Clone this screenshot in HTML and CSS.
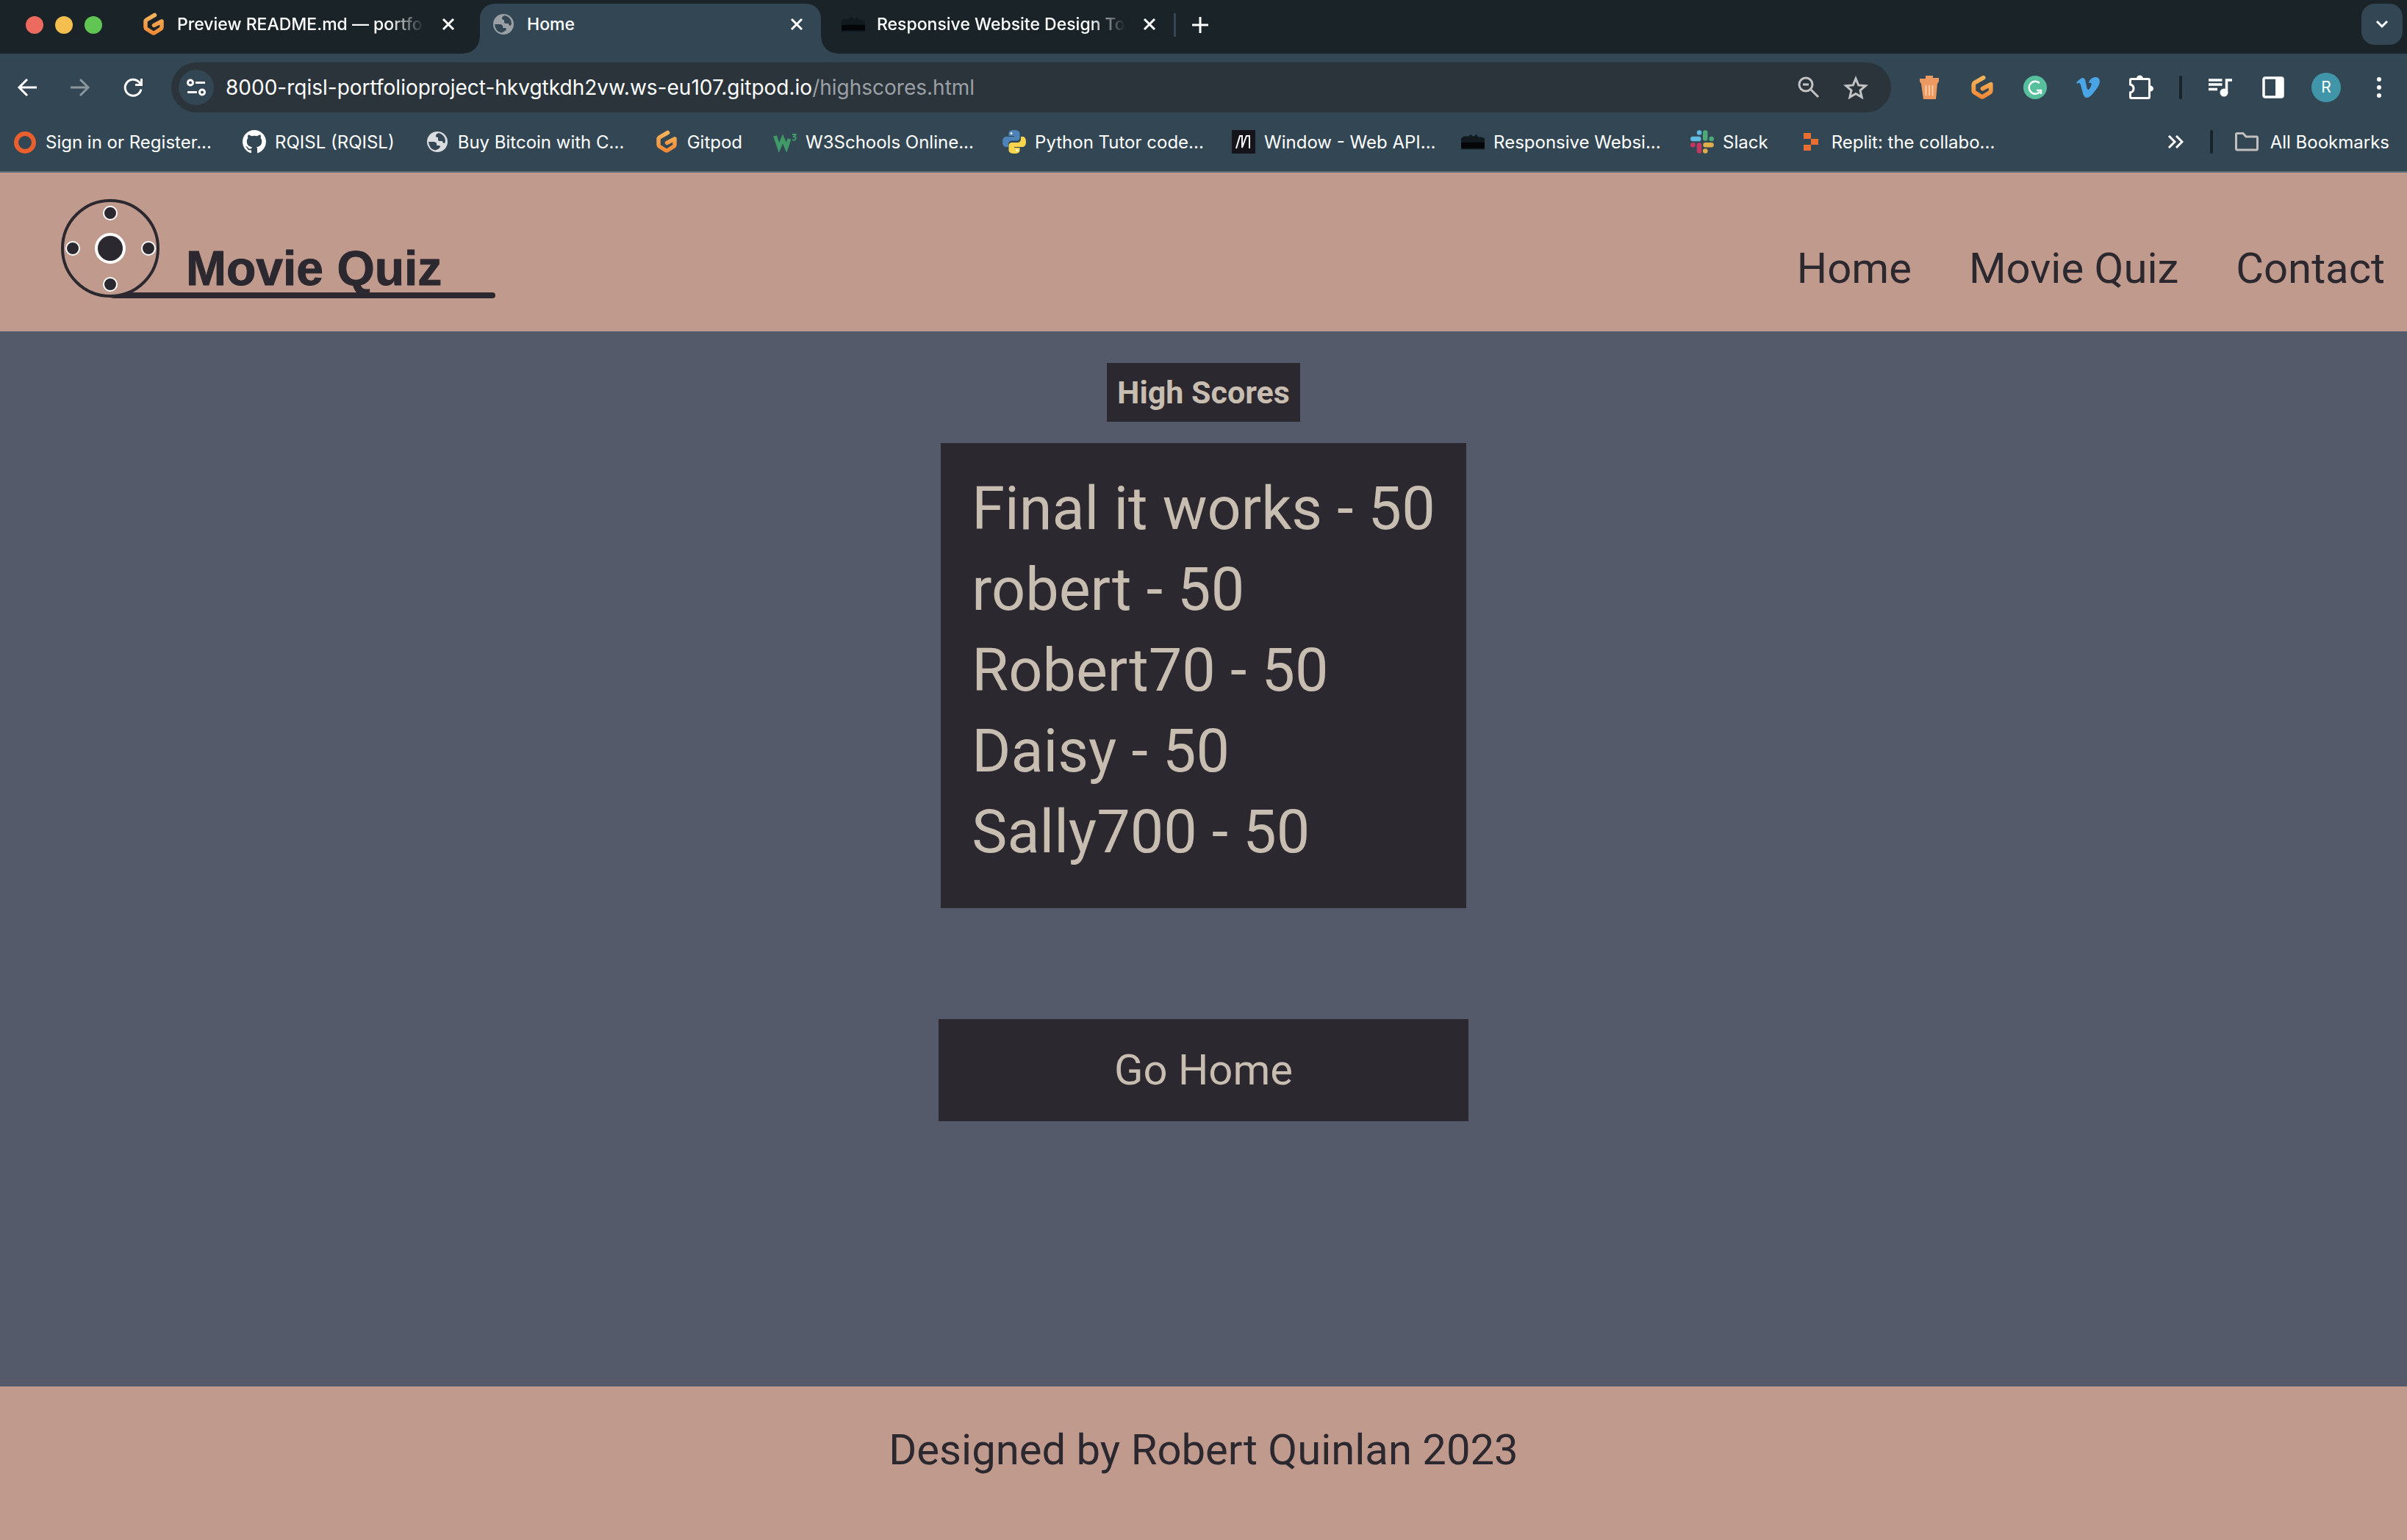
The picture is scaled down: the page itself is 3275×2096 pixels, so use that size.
FILE: index.html
```html
<!DOCTYPE html>
<html lang="en">
<head>
<meta charset="utf-8">
<title>Home</title>
<link rel="stylesheet" href="styles.css">
</head>
<body>
<svg class="sprite" aria-hidden="true">
  <defs>
    <linearGradient id="orange" x1="0" y1="0" x2="0" y2="1"><stop offset="0" stop-color="#f5b45c"/><stop offset="1" stop-color="#f08a38"/></linearGradient>
    <symbol id="gitpod" viewBox="0 0 32 32"><path d="M17.500 3.500 6.500 9.800Q5 10.800 5 12.500V20Q5 21.600 6.500 22.500L14.500 27.500Q16 28.400 17.500 27.500L25.500 22.500Q27 21.600 27 20V12L16.500 17.500" fill="none" stroke="url(#orange)" stroke-width="5.500" stroke-linecap="round" stroke-linejoin="round"/></symbol>
    <symbol id="globe" viewBox="0 0 32 32"><circle cx="16" cy="16" r="14" fill="currentColor"/><path class="globe-land" d="M4 16h8q4 1 3 5h3q2 0 2 2-2 3-7 4.500Q5 26 4 16zM18 4q-4 1-4 4 0 2 3 2v3q0 2 3 2h3q0 3 3 3l1-3q0-8-9-11z"/></symbol>
    <symbol id="close" viewBox="0 0 18 18"><path d="m2 2 14 14M16 2 2 16" fill="none" stroke="currentColor" stroke-width="3"/></symbol>
    <symbol id="skyline" viewBox="0 0 34 22"><path d="M0 22V6l4-3h7l3-3 3 3h2l3-3 3 4h4l5 2v16z" fill="#101a1f"/><path d="M0 12h34v8H0z" fill="#030506"/></symbol>
  </defs>
</svg>

<header class="browser">
  <div class="tabstrip">
    <div class="lights"><span class="light red"></span><span class="light yellow"></span><span class="light green"></span></div>
    <div class="tab first">
      <svg class="favicon"><use href="#gitpod"/></svg>
      <span class="tab-title faded">Preview README.md — portfo</span>
      <button class="tab-close" aria-label="Close tab"><svg width="18" height="18"><use href="#close"/></svg></button>
    </div>
    <div class="tab active">
      <svg class="favicon gray"><use href="#globe"/></svg>
      <span class="tab-title">Home</span>
      <button class="tab-close" aria-label="Close tab"><svg width="18" height="18"><use href="#close"/></svg></button>
    </div>
    <div class="tab last">
      <svg class="favicon"><use href="#skyline"/></svg>
      <span class="tab-title faded">Responsive Website Design To</span>
      <button class="tab-close" aria-label="Close tab"><svg width="18" height="18"><use href="#close"/></svg></button>
    </div>
    <button class="new-tab" aria-label="New tab"><svg width="22" height="22" viewBox="0 0 22 22"><path d="M11 0v22M0 11h22" stroke="#fff" stroke-width="3"/></svg></button>
    <button class="tab-search" aria-label="Search tabs"><svg width="18" height="12" viewBox="0 0 18 12"><path d="m2 2 7 7 7-7" fill="none" stroke="#fff" stroke-width="3"/></svg></button>
  </div>

  <div class="toolbar">
    <button class="tool" aria-label="Back"><svg width="28" height="28" viewBox="0 0 28 28"><path d="M27 14H4M14 3 3 14l11 11" fill="none" stroke="#fff" stroke-width="3"/></svg></button>
    <button class="tool" aria-label="Forward"><svg width="28" height="28" viewBox="0 0 28 28"><path d="M1 14h23M14 3l11 11-11 11" fill="none" stroke="#8b959c" stroke-width="3"/></svg></button>
    <button class="tool" aria-label="Reload"><svg width="28" height="28" viewBox="0 0 28 28"><path d="M25 16.500A11 11 0 1 1 22 6.500l3 3M25.500 2v8.500H17" fill="none" stroke="#fff" stroke-width="3"/></svg></button>
    <div class="omnibox">
      <button class="site-info" aria-label="Site information"><svg width="26" height="24" viewBox="0 0 26 24" fill="none" stroke="#fff" stroke-width="3"><circle cx="5" cy="5.500" r="3.500"/><path d="M12 5.500h13M1 18.500h13"/><circle cx="21" cy="18.500" r="3.500"/></svg></button>
      <div class="url">8000-rqisl-portfolioproject-hkvgtkdh2vw.ws-eu107.gitpod.io<span class="path">/highscores.html</span></div>
      <button class="omni-icon" aria-label="Zoom"><svg width="30" height="30" viewBox="0 0 30 30" fill="none" stroke="#c3c3c3" stroke-width="3"><circle cx="11" cy="11" r="9"/><path d="M7 11h8M18 18l10 10"/></svg></button>
      <button class="omni-icon" aria-label="Bookmark this page"><svg width="34" height="32" viewBox="0 0 34 32"><path d="m17 4 3.700 8.900 9.600.8-7.300 6.300 2.200 9.400L17 24.400l-8.200 5 2.200-9.400-7.300-6.300 9.600-.8z" fill="none" stroke="#c3c3c3" stroke-width="3"/></svg></button>
    </div>
    <button class="tool" aria-label="Trash"><svg width="28" height="32" viewBox="0 0 28 32"><path d="M9 0h10v3h8v5l-2 3-2 21H6L3 11 1 8V4h8z" fill="#ec9a62"/><path d="M9.500 13v14M14 13v14M18.500 13v14" stroke="#f7c9a4" stroke-width="2"/></svg></button>
    <button class="tool" aria-label="Gitpod"><svg width="34" height="34"><use href="#gitpod"/></svg></button>
    <button class="tool" aria-label="Grammarly"><svg width="32" height="32" viewBox="0 0 32 32"><circle cx="16" cy="16" r="16" fill="#57bf9b"/><path d="M22 10A8.500 8.500 0 1 0 22.500 22M18 20h6v5" fill="none" stroke="#fff" stroke-width="2.500"/></svg></button>
    <button class="tool" aria-label="Vimeo"><svg width="32" height="28" viewBox="0 0 32 28"><path d="M31.900 6.500c-.1 3-2.300 7.200-6.600 12.500C20.900 25 17.200 28 14 28c-1.900 0-3.500-1.800-4.800-5.300L6.600 12.900C5.700 9.500 4.700 7.700 3.600 7.700c-.2 0-1 .5-2.300 1.400L0 7.300l4.200-3.700C6 2 7.500 1 8.500.9c2.200-.2 3.600 1.300 4.100 4.600l1.400 7.300c.6 2.900 1.300 4.400 2.100 4.400.6 0 1.500-.9 2.700-2.800 1.200-1.900 1.800-3.300 1.900-4.300.2-1.600-.5-2.400-1.900-2.400-.7 0-1.400.1-2.100.4C18.100 3.500 20.900 1.300 25.200.1c4.600-.3 6.900 2 6.700 6.400z" fill="#4aa5e6"/></svg></button>
    <button class="tool" aria-label="Extensions"><svg width="34" height="36" viewBox="0 0 34 36"><path d="M2.500 8q0-1.500 1.500-1.500H27q1.500 0 1.500 1.500v23q0 1.500-1.500 1.500H4Q2.500 32.500 2.500 31v-6q4.500-1 4.500-5.500T2.500 14z" fill="none" stroke="#fff" stroke-width="3"/><path d="M11 6a4.500 4.500 0 0 1 9 0zM29 15q5 1 5 4.500T29 24z" fill="#fff"/></svg></button>
    <span class="divider tool-divider"></span>
    <button class="tool" aria-label="Media"><svg width="32" height="26" viewBox="0 0 32 26"><path d="M0 3h18.500M0 9h18.500M0 15.500h12M24.500 20V3H32" fill="none" stroke="#fff" stroke-width="3.500"/><circle cx="21" cy="20" r="5.500" fill="#fff"/></svg></button>
    <button class="tool" aria-label="Side panel"><svg width="30" height="30" viewBox="0 0 30 30"><rect x="2" y="2" width="26" height="26" rx="2" fill="none" stroke="#fff" stroke-width="3.500"/><path d="M18 2h10v26H18z" fill="#fff"/></svg></button>
    <button class="tool" aria-label="Profile"><span class="avatar">R</span></button>
    <button class="tool" aria-label="Menu"><svg width="6" height="28" viewBox="0 0 6 28" fill="#fff"><circle cx="3" cy="3" r="3"/><circle cx="3" cy="14" r="3"/><circle cx="3" cy="25" r="3"/></svg></button>
  </div>

  <nav class="bookmarks" aria-label="Bookmarks">
    <a class="bookmark" href="#"><svg viewBox="0 0 32 32"><circle cx="16" cy="17" r="12" fill="none" stroke="#ea5f2e" stroke-width="6"/></svg><span class="long">Sign in or Register...</span></a>
    <a class="bookmark" href="#"><svg viewBox="0 0 16 16"><path fill="#fff" d="M8 0C3.580 0 0 3.580 0 8c0 3.540 2.290 6.530 5.470 7.590.4.070.55-.17.55-.38 0-.19-.01-.82-.01-1.490-2.010.37-2.530-.49-2.690-.94-.09-.23-.48-.94-.82-1.130-.28-.15-.68-.52-.01-.53.63-.01 1.080.58 1.230.82.720 1.210 1.870.87 2.330.66.070-.52.280-.87.510-1.070-1.780-.2-3.640-.89-3.640-3.950 0-.87.310-1.590.820-2.150-.08-.2-.36-1.020.08-2.120 0 0 .67-.21 2.200.82.640-.18 1.320-.27 2-.27s1.360.09 2 .27c1.530-1.040 2.200-.82 2.200-.82.440 1.100.160 1.920.080 2.120.510.560.820 1.270.820 2.150 0 3.070-1.870 3.750-3.650 3.950.290.250.540.730.540 1.480 0 1.070-.01 1.930-.01 2.200 0 .21.150.46.550.38A8 8 0 0 0 16 8c0-4.420-3.580-8-8-8z"/></svg><span>RQISL (RQISL)</span></a>
    <a class="bookmark light-globe" href="#"><svg><use href="#globe"/></svg><span class="long">Buy Bitcoin with C...</span></a>
    <a class="bookmark" href="#"><svg><use href="#gitpod"/></svg><span>Gitpod</span></a>
    <a class="bookmark" href="#"><svg viewBox="0 0 32 32"><path d="m2.500 8 5.500 16 5-12 5 12 4-12" fill="none" stroke="#3f9a68" stroke-width="5"/><path d="M26 6h4.500l-2.500 3q3.500 0 2.500 3t-4.500 1" fill="none" stroke="#3f9a68" stroke-width="2"/></svg><span class="long">W3Schools Online...</span></a>
    <a class="bookmark" href="#"><svg viewBox="0 0 32 32"><path fill="#4d83b8" d="M16 0c-6 0-7.500 2-7.500 4.500V8H16v1H5C2 9 0 11.500 0 16s2 7 4.500 7H8v-4c0-2.500 2-4.500 4.500-4.500h7c2 0 4-1.500 4-4V4.500C23.500 2 21 0 16 0z"/><path fill="#f8d54c" d="M16 32c6 0 7.500-2 7.500-4.500V24H16v-1h11c3 0 5-2.500 5-7s-2-7-4.500-7H25v3.500c0 2.500-2 4.500-4.500 4.500h-8c-2 0-4 1.500-4 4v6.500C8.500 30 11 32 16 32z"/><circle cx="12" cy="4.500" r="1.500" fill="#fff"/><circle cx="20" cy="27.500" r="1.500" fill="#fff"/></svg><span class="long">Python Tutor code...</span></a>
    <a class="bookmark" href="#"><svg viewBox="0 0 32 32"><path fill="#15141a" d="M0 0h32v32H0z"/><path d="M6 25 11 8h3v16L20 8h4v17" fill="none" stroke="#fff" stroke-width="2"/></svg><span class="long">Window - Web API...</span></a>
    <a class="bookmark" href="#"><svg><use href="#skyline"/></svg><span class="long">Responsive Websi...</span></a>
    <a class="bookmark" href="#"><svg viewBox="0 0 32 32" stroke-width="6.500" stroke-linecap="round"><path stroke="#60b9de" d="M3.300 12h8M12 3.500h.1"/><path stroke="#4fa878" d="M20.200 3.500v8M28.600 12h.1"/><path stroke="#dfae49" d="M20.500 20.200h8M20.200 28.600h.1"/><path stroke="#c93561" d="M12 20.500v8M3.400 20.200h.1"/></svg><span>Slack</span></a>
    <a class="bookmark" href="#"><svg viewBox="0 0 32 32" fill="#e66f31"><path d="M6 4h10v8H6zM16 12h10v8H16zM6 20h10v8H6z"/></svg><span class="long">Replit: the collabo...</span></a>
    <button class="overflow" aria-label="More bookmarks"><svg width="22" height="18" viewBox="0 0 22 18"><path d="m2 1 8 8-8 8M12 1l8 8-8 8" fill="none" stroke="#fff" stroke-width="3"/></svg></button>
    <span class="divider"></span>
    <a class="bookmark all" href="#"><svg viewBox="0 0 32 32"><path d="M1.500 25V6q0-1.500 1.500-1.500h8l4 4.500h14q1.500 0 1.500 1.500V25q0 2-1.500 2H3q-1.500 0-1.500-2z" fill="none" stroke="#c3bfbf" stroke-width="3"/></svg><span>All Bookmarks</span></a>
  </nav>
</header>

<div class="page">
  <header class="site-header">
    <a class="logo" href="#" aria-label="Movie Quiz">
      <svg width="600" height="140" viewBox="0 0 600 140">
        <circle cx="70" cy="69" r="65" fill="none" stroke="#2c282f" stroke-width="4"/>
        <path d="M70 137 100 129H590a4 4 0 0 1 0 8z" fill="#2c282f"/>
        <g fill="#2c282f" stroke="#fff" stroke-width="2"><circle cx="70" cy="21" r="9"/><circle cx="19" cy="69" r="9"/><circle cx="122" cy="69" r="9"/><circle cx="70" cy="118" r="9"/></g>
        <circle cx="70" cy="69" r="19" fill="#2c282f" stroke="#fff" stroke-width="4"/>
        <text class="logo-text" x="173" y="119">Movie Quiz</text>
      </svg>
    </a>
    <nav class="site-nav" aria-label="Main"><a href="#">Home</a><a href="#">Movie Quiz</a><a href="#">Contact</a></nav>
  </header>
  <main class="scores">
    <h1>High Scores</h1>
    <ul class="score-list"><li>Final it works - 50</li><li>robert - 50</li><li>Robert70 - 50</li><li>Daisy - 50</li><li>Sally700 - 50</li></ul>
    <a class="go-home" href="#">Go Home</a>
  </main>
  <footer class="site-footer"><p>Designed by Robert Quinlan 2023</p></footer>
</div>
</body>
</html>
```
FILE: styles.css
```css
* { box-sizing: border-box; margin: 0; padding: 0; }

body {
  display: flex;
  flex-direction: column;
  min-height: 100vh;
  font-family: Roboto, "Liberation Sans", sans-serif;
  color: #2c282f;
}

a { color: inherit; text-decoration: none; }
button { display: flex; align-items: center; justify-content: center; border: 0; background: none; color: inherit; font: inherit; }
svg { display: block; flex: none; }
.sprite { position: absolute; width: 0; height: 0; }

/* Browser frame */
.browser {
  background: #334653;
  border-bottom: 2px solid #5f6f7d;
  color: #fff;
  font-family: Inter, "Liberation Sans", sans-serif;
  font-size: 23px;
  font-weight: 500;
}

.tabstrip { display: flex; height: 73px; padding: 5px 6px 0 35px; background: #1a2428; }
.lights { display: flex; gap: 16px; width: 142px; height: 58px; align-items: center; }
.light { width: 24px; height: 24px; border-radius: 50%; }
.red { background: #ed6a5e; }
.yellow { background: #f4bf4f; }
.green { background: #61c554; }

.tab { position: relative; display: flex; align-items: center; width: 476px; padding: 0 24px 12px 16px; }
.tab.first { padding-right: 34px; }
.tab.active { width: 464px; margin-right: 12px; border-radius: 20px 20px 0 0; background: #334653; }
.tab.active::before, .tab.active::after { content: ""; position: absolute; bottom: 0; width: 22px; height: 22px; }
.tab.active::before { right: 100%; background: radial-gradient(circle at 0 0, #1a2428 21px, #334653 22px); }
.tab.active::after { left: 100%; background: radial-gradient(circle at 100% 0, #1a2428 21px, #334653 22px); }
.tab.last { width: 471px; padding-right: 32px; }
.tab.last::after { content: ""; position: absolute; right: 0; top: 13px; width: 3px; height: 32px; background: #334653; }
.favicon { width: 32px; height: 32px; }
.gray { color: #9aa0a6; }
.globe-land { fill: #334653; }
.tab-title { flex: 1 0 0; margin: 0 24px 0 16px; white-space: nowrap; }
.faded { mask-image: linear-gradient(to right, #000 calc(100% - 48px), transparent); }
.new-tab { width: 66px; height: 58px; }
.tab-search { width: 56px; height: 56px; margin-left: auto; border-radius: 18px; background: #334653; }

.toolbar { display: flex; align-items: center; height: 92px; padding: 0 2px 0 1px; }
.tool { width: 72px; height: 68px; flex: none; }
.omnibox {
  display: flex;
  align-items: center;
  flex: 1;
  height: 68px;
  margin: 0 16px;
  padding: 0 16px 0 10px;
  border-radius: 34px;
  background: #2a343a;
}
.site-info { width: 48px; height: 48px; border-radius: 50%; background: #334653; }
.url { flex: 1; margin-left: 16px; font-size: 28px; font-weight: 400; white-space: nowrap; }
.path { color: #9aa0a6; }
.omni-icon { width: 64px; height: 64px; }
.divider { width: 4px; height: 32px; border-radius: 2px; background: #1a2428; }
.tool-divider { margin: 0 16px; }
.avatar { width: 40px; height: 40px; border-radius: 50%; background: #4096a8; font-size: 21px; font-weight: 400; line-height: 40px; }

.bookmarks { display: flex; align-items: center; height: 68px; padding: 0 24px 12px 18px; font-size: 24px; font-weight: 400; }
.bookmark { display: flex; align-items: center; gap: 12px; margin-right: 42px; white-space: nowrap; }
.bookmark svg { width: 32px; height: 32px; }
.light-globe svg { color: #dadce0; }
.long { width: 226px; }
.overflow { margin: 0 36px 0 auto; }
.all { gap: 16px; margin: 0 0 0 30px; }

/* Quiz site */
.page { display: flex; flex: 1; flex-direction: column; background: #555a6a; }
.site-header { display: flex; align-items: flex-start; justify-content: space-between; height: 216px; padding: 34px 30px 0 80px; background: #c09a8d; }
.logo-text { fill: #2c282f; stroke: #2c282f; stroke-width: 1px; stroke-linejoin: round; font: bold 66px "Liberation Sans", Arial, sans-serif; }
.site-nav { display: flex; gap: 78px; margin-top: 62px; font-size: 58px; line-height: 68px; }

.scores { display: flex; flex: 1; flex-direction: column; align-items: center; padding-top: 43px; color: #c8bdb1; }
.scores h1, .score-list, .go-home { background: #2c282f; }
.scores h1 { padding: 10px 14px; font-size: 43px; line-height: 60px; }
.score-list { margin-top: 29px; padding: 35px 42px 48px; list-style: none; font-size: 81px; line-height: 110px; }
.go-home { width: 22%; margin-top: 151px; font-size: 58px; line-height: 139px; text-align: center; }

.site-footer { height: 209px; padding-top: 52px; background: #c09a8d; font-size: 58px; line-height: 68px; text-align: center; }
```
